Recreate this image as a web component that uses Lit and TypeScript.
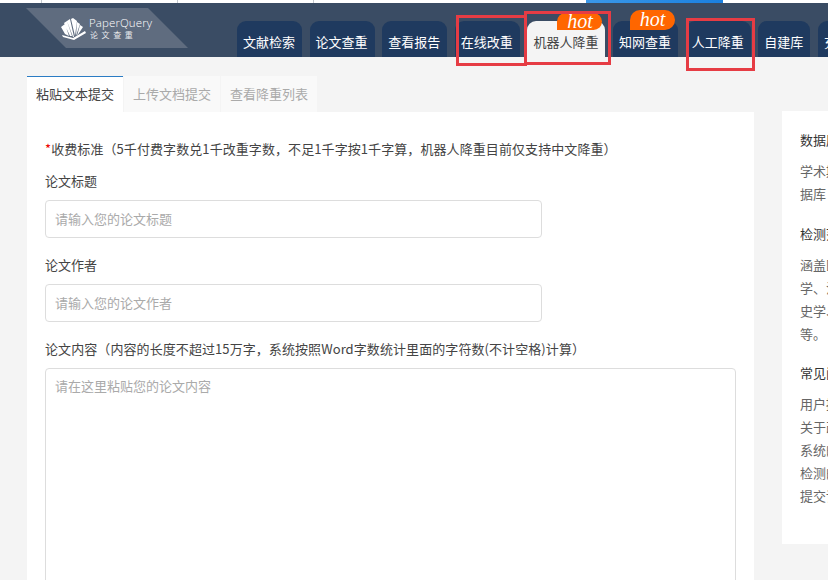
import { LitElement, html, css } from "lit";
import { customElement } from "lit/decorators.js";

@customElement("app-root")
export class AppRoot extends LitElement {
  static styles = css`
    :host { display: block; width: 828px; height: 580px; overflow: hidden; position: relative; background: #f4f4f4;
      font-family: "Noto Sans CJK SC", "Liberation Sans", sans-serif; font-size: 13px; color: #444; }
    .strip { height: 3px; background: #fff; display: flex; }
    .cell { width: 135px; border-right: 1px solid #c4c9cf; flex: none; }
    .cell.first { width: 41px; }
    .cell.wide { width: 272px; border-right: 0; }
    .blue { width: 137px; flex: none; background: linear-gradient(90deg, #3b98e8, #1a80e0); }
    .header { height: 54px; background: #3a4c64; display: flex; align-items: flex-end; padding-left: 26px; }
    .logo { width: 162px; height: 40px; flex: none; align-self: flex-start; margin-top: 5px; margin-right: 49px; background: #5f6c7f;
      clip-path: polygon(0 0, 122px 0, 100% 100%, 40px 100%); display: flex; align-items: center; padding-left: 35px; box-sizing: border-box; color: #fff; }
    .logo svg { width: 26px; height: 22px; flex: none; margin-right: 2px; margin-top: 1px; }
    .logotext { display: flex; flex-direction: column; }
    .logotext b { font: 300 11.5px/13px "Open Sans", sans-serif; letter-spacing: .1px; }
    .logotext span { font-size: 8px; line-height: 11px; letter-spacing: 3.6px; margin-left: 1px; opacity: .85; }
    .nav { display: flex; gap: 7.6px; flex: none; }
    .tab { position: relative; height: 36px; box-sizing: border-box; padding: 12px 7px 0 6px; background: #1f3a5f; color: #fff; border-radius: 9px 9px 0 0; line-height: 17px; white-space: nowrap; }
    .tab.on { background: #f4f4f4; color: #444; }
    .hot { position: absolute; background: #ff6600; color: #fff; font: italic 20px/16px "Liberation Serif", serif; text-align: center; width: 45px; height: 17px; }
    .hot.a { top: -8px; right: 3px; border-radius: 9px 9px 9px 0; }
    .hot.b { top: -11px; left: 17px; height: 20px; line-height: 19px; border-radius: 10px 10px 10px 0; }
    .box { position: absolute; border: 3px solid #e63c44; box-sizing: border-box; pointer-events: none; }
    .b1 { left: 456px; top: 15px; width: 71px; height: 51px; }
    .b2 { left: 524px; top: 11px; width: 87px; height: 54px; }
    .b3 { left: 686px; top: 18px; width: 69px; height: 53px; }
    .content { display: flex; gap: 28px; padding: 19px 0 0 27px; align-items: flex-start; }
    .main { width: 727px; flex: none; }
    .tabs { display: flex; gap: 1px; height: 36px; }
    .t { width: 96px; height: 36px; box-sizing: border-box; background: #f9f9f9; color: #aaa; text-align: center; line-height: 35px; }
    .t.on { background: #fff; color: #444; border-top: 1px solid #2b7cc4; line-height: 33px; }
    .card { background: #fff; padding: 27px 18px 0; height: 500px; box-sizing: border-box; }
    .fee { line-height: 20px; height: 20px; color: #444; margin-bottom: 12px; white-space: nowrap; letter-spacing: .08px; }
    .fee i { color: #e00; font-style: normal; }
    .label { line-height: 20px; height: 20px; margin-bottom: 9px; white-space: nowrap; }
    .label.long { letter-spacing: .08px; }
    .input { width: 497px; height: 38px; box-sizing: border-box; border: 1px solid #ddd; border-radius: 4px; padding: 0 9px; line-height: 36px; color: #aaa; margin-bottom: 17px; }
    .area { width: 691px; height: 300px; box-sizing: border-box; border: 1px solid #ddd; border-radius: 4px; padding: 8px 9px; line-height: 18px; color: #aaa; }
    .side { width: 300px; height: 433px; flex: none; background: #fff; margin-top: 35px; padding: 19px 18px 0; box-sizing: border-box; white-space: nowrap; }
    .side h4 { font-weight: 400; font-size: 13px; line-height: 20px; margin: 0 0 9px; color: #333; }
    .side p { margin: 0 0 18.5px; line-height: 23px; color: #666; }
  `;

  render() {
    return html`
      <div class="strip">
        <div class="cell first"></div><div class="cell"></div><div class="cell"></div><div class="cell wide"></div><div class="blue"></div>
      </div>
      <div class="header">
        <div class="logo">
          <svg viewBox="0 0 26 22" fill="#fff">
            <path d="M0 9 L4 6 L8 18 L4 16 Z M3 5 L6 3 L11 18 L9 18 Z M6 3 L9 1 L13 19 L12 19 Z M10 1 L12 0 L16 3 L14 18 Z M16 4 L19 6 L15 18 Z M19 7 L22 9 L16 18 Z"/>
            <path d="M1 17 L12 20 L24 13 L25 15 L13 22 L2 19 Z"/>
          </svg>
          <div class="logotext"><b>PaperQuery</b><span>论文查重</span></div>
        </div>
        <div class="nav">
          <div class="tab">文献检索</div>
          <div class="tab">论文查重</div>
          <div class="tab">查看报告</div>
          <div class="tab">在线改重</div>
          <div class="tab on">机器人降重<span class="hot a">hot</span></div>
          <div class="tab">知网查重<span class="hot b">hot</span></div>
          <div class="tab">人工降重</div>
          <div class="tab">自建库</div>
          <div class="tab">充值中心</div>
        </div>
      </div>
      <div class="box b1"></div><div class="box b2"></div><div class="box b3"></div>
      <div class="content">
        <div class="main">
          <div class="tabs">
            <div class="t on">粘贴文本提交</div><div class="t">上传文档提交</div><div class="t">查看降重列表</div>
          </div>
          <div class="card">
            <div class="fee"><i>*</i>收费标准（5千付费字数兑1千改重字数，不足1千字按1千字算，机器人降重目前仅支持中文降重）</div>
            <div class="label">论文标题</div>
            <div class="input">请输入您的论文标题</div>
            <div class="label">论文作者</div>
            <div class="input">请输入您的论文作者</div>
            <div class="label long">论文内容（内容的长度不超过15万字，系统按照Word字数统计里面的字符数(不计空格)计算）</div>
            <div class="area">请在这里粘贴您的论文内容</div>
          </div>
        </div>
        <div class="side">
          <h4>数据库说明</h4>
          <p>学术期刊、学位论文、会议论文数<br>据库</p>
          <h4>检测范围</h4>
          <p>涵盖医学、文学、理学、工学、农<br>学、法学、经济学、管理学、哲<br>史学、教育学、艺术学<br>等。</p>
          <h4>常见问题</h4>
          <p>用户提交须知<br>关于改重结果<br>系统的使用说明<br>检测的准确程度<br>提交论文的格式</p>
        </div>
      </div>
    `;
  }
}
